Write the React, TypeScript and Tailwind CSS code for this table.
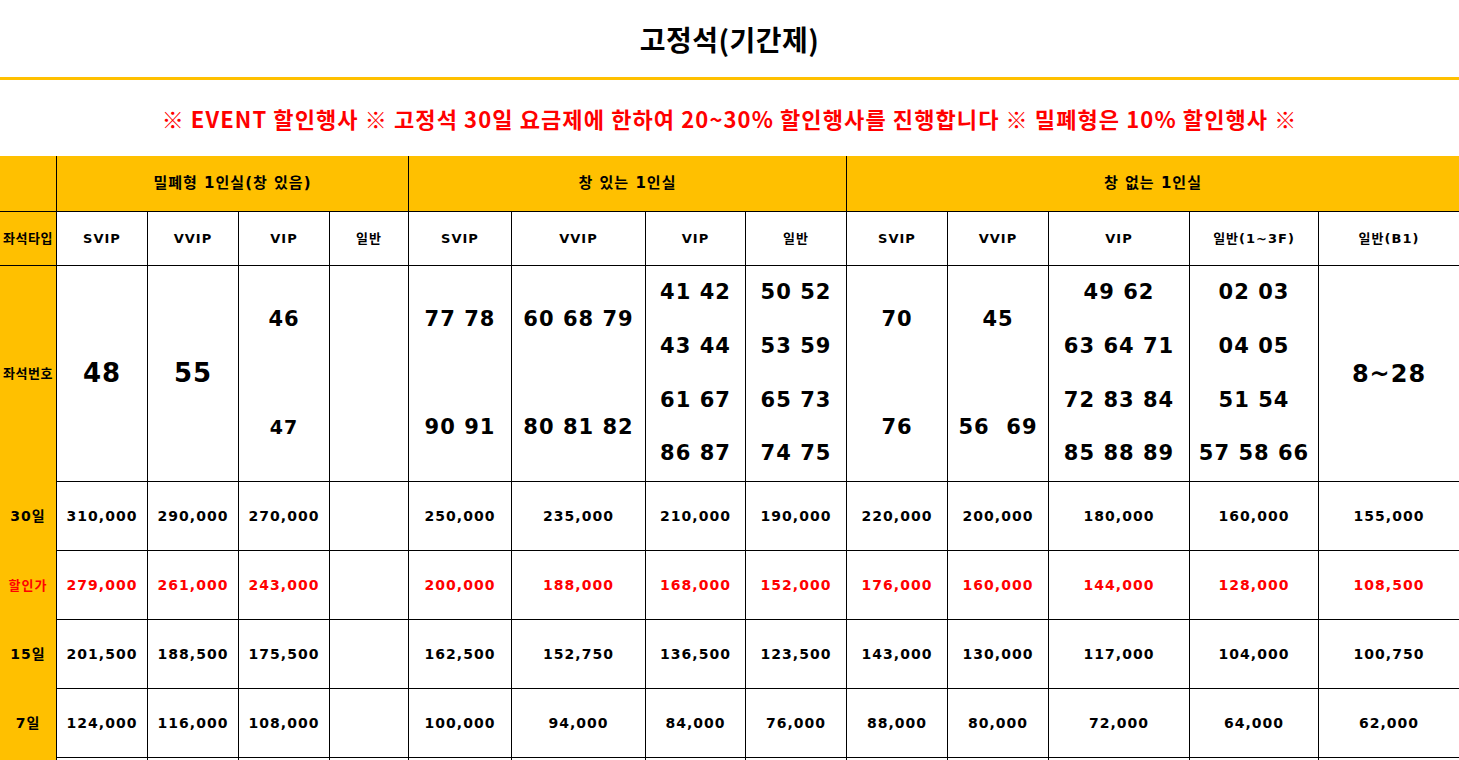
const cols =
  "grid-cols-[57px_91px_91px_91px_79px_103px_134px_100px_101px_101px_101px_141px_129px_1fr]"

const types = [
  "SVIP", "VVIP", "VIP", "일반",
  "SVIP", "VVIP", "VIP", "일반",
  "SVIP", "VVIP", "VIP", "일반(1~3F)", "일반(B1)",
]

type Seat = { lines: string[]; size?: string }

const seats: Seat[] = [
  { lines: ["48"], size: "text-[26px]" },
  { lines: ["55"], size: "text-[26px]" },
  { lines: ["46", "47"] },
  { lines: [] },
  { lines: ["77 78", "90 91"] },
  { lines: ["60 68 79", "80 81 82"] },
  { lines: ["41 42", "43 44", "61 67", "86 87"] },
  { lines: ["50 52", "53 59", "65 73", "74 75"] },
  { lines: ["70", "76"] },
  { lines: ["45", "56\u00a0\u00a069"] },
  { lines: ["49 62", "63 64 71", "72 83 84", "85 88 89"] },
  { lines: ["02 03", "04 05", "51 54", "57 58 66"] },
  { lines: ["8~28"], size: "text-[24px]" },
]

const prices: { label: string; red?: boolean; values: string[] }[] = [
  {
    label: "30일",
    values: ["310,000", "290,000", "270,000", "", "250,000", "235,000", "210,000", "190,000", "220,000", "200,000", "180,000", "160,000", "155,000"],
  },
  {
    label: "할인가",
    red: true,
    values: ["279,000", "261,000", "243,000", "", "200,000", "188,000", "168,000", "152,000", "176,000", "160,000", "144,000", "128,000", "108,500"],
  },
  {
    label: "15일",
    values: ["201,500", "188,500", "175,500", "", "162,500", "152,750", "136,500", "123,500", "143,000", "130,000", "117,000", "104,000", "100,750"],
  },
  {
    label: "7일",
    values: ["124,000", "116,000", "108,000", "", "100,000", "94,000", "84,000", "76,000", "88,000", "80,000", "72,000", "64,000", "62,000"],
  },
]

const cell = "flex items-center justify-center border-black"

export default function App() {
  return (
    <div className="min-h-screen bg-white font-['DejaVu_Sans','Noto_Sans_CJK_KR',sans-serif] text-black">
      <header className="flex h-[77px] items-center justify-center">
        <h1 className="font-['Noto_Sans_CJK_KR',sans-serif] text-[28px] font-bold tracking-[0.5px]">고정석(기간제)</h1>
      </header>
      <div className="h-[3px] bg-[#ffc000]" />
      <p className="flex h-[76px] items-center justify-center font-['Noto_Sans_CJK_KR',sans-serif] text-[22px] font-bold tracking-[1.1px] text-[#ff0000]">
        ※ EVENT 할인행사 ※ 고정석 30일 요금제에 한하여 20~30% 할인행사를 진행합니다 ※ 밀폐형은 10% 할인행사 ※
      </p>

      <PriceTable />
    </div>
  )
}

function PriceTable() {
  return (
    <div
      className={`grid ${cols} grid-rows-[56px_54px_216px_69px_69px_69px_69px_30px] text-[14px] font-bold`}
    >
      {/* group header */}
      <div className="border-r border-b border-black bg-[#ffc000]" />
      <div className={`${cell} col-span-4 border-r border-b bg-[#ffc000] text-[15px] tracking-[1px]`}>
        밀폐형 1인실(창 있음)
      </div>
      <div className={`${cell} col-span-4 border-r border-b bg-[#ffc000] text-[15px] tracking-[1px]`}>
        창 있는 1인실
      </div>
      <div className={`${cell} col-span-5 border-b bg-[#ffc000] text-[15px] tracking-[1px]`}>
        창 없는 1인실
      </div>

      {/* seat types */}
      <div className={`${cell} border-r border-b bg-[#ffc000] text-[13px] tracking-[0.5px]`}>좌석타입</div>
      {types.map((t, i) => (
        <div
          key={i}
          className={`${cell} border-b text-[13px] tracking-[1px] ${i < types.length - 1 ? "border-r" : ""}`}
        >
          {t}
        </div>
      ))}

      {/* seat numbers */}
      <div className={`${cell} border-r bg-[#ffc000] text-[13px] tracking-[0.5px]`}>좌석번호</div>
      {seats.map((s, i) => (
        <div
          key={i}
          className={`flex flex-col border-b border-black tracking-[1px] ${i < seats.length - 1 ? "border-r" : ""} ${s.size ?? "text-[21px]"}`}
        >
          {s.lines.map((line, j) => (
            <div
              key={j}
              className={`flex flex-1 items-center justify-center whitespace-pre ${line === "47" ? "text-[19px]" : ""}`}
            >
              {line}
            </div>
          ))}
        </div>
      ))}

      {/* prices */}
      {prices.map((row) => (
        <PriceRow key={row.label} {...row} />
      ))}

      {/* next row, cut off by the window */}
      <div className="border-r border-black bg-[#ffc000]" />
      {types.map((_, i) => (
        <div key={i} className={`border-black ${i < types.length - 1 ? "border-r" : ""}`} />
      ))}
    </div>
  )
}

function PriceRow({ label, red, values }: { label: string; red?: boolean; values: string[] }) {
  return (
    <>
      <div
        className={`${cell} border-r bg-[#ffc000] tracking-[1px] ${red ? "text-[13px] text-[#ff0000]" : "text-[14px]"}`}
      >
        {label}
      </div>
      {values.map((v, i) => (
        <div
          key={i}
          className={`${cell} border-b tracking-[1px] ${red ? "text-[#ff0000]" : ""} ${i < values.length - 1 ? "border-r" : ""}`}
        >
          {v}
        </div>
      ))}
    </>
  )
}
